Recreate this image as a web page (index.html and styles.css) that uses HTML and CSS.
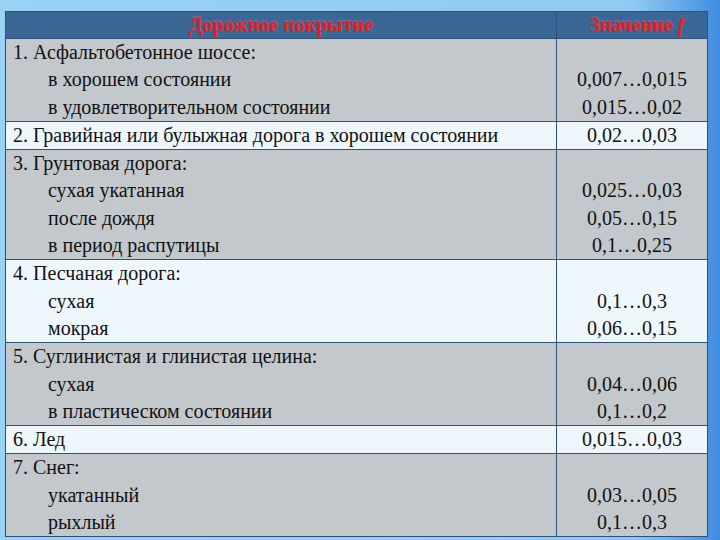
FILE: index.html
```html
<!DOCTYPE html>
<html lang="ru">
<head>
<meta charset="utf-8">
<link rel="stylesheet" href="styles.css">
</head>
<body>
<div class="slide">
<table class="grid">
<thead>
<tr><th class="c1">Дорожное покрытие</th><th class="c2">Значение <i>f</i></th></tr>
</thead>
<tbody>
<tr class="gray">
<td class="c1"><div>1. Асфальтобетонное шоссе:</div><div class="sub">в хорошем состоянии</div><div class="sub">в удовлетворительном состоянии</div></td>
<td class="c2"><div>&nbsp;</div><div>0,007…0,015</div><div>0,015…0,02</div></td>
</tr>
<tr class="light">
<td class="c1"><div>2. Гравийная или булыжная дорога в хорошем состоянии</div></td>
<td class="c2"><div>0,02…0,03</div></td>
</tr>
<tr class="gray">
<td class="c1"><div>3. Грунтовая дорога:</div><div class="sub">сухая укатанная</div><div class="sub">после дождя</div><div class="sub">в период распутицы</div></td>
<td class="c2"><div>&nbsp;</div><div>0,025…0,03</div><div>0,05…0,15</div><div>0,1…0,25</div></td>
</tr>
<tr class="light">
<td class="c1"><div>4. Песчаная дорога:</div><div class="sub">сухая</div><div class="sub">мокрая</div></td>
<td class="c2"><div>&nbsp;</div><div>0,1…0,3</div><div>0,06…0,15</div></td>
</tr>
<tr class="gray">
<td class="c1"><div>5. Суглинистая и глинистая целина:</div><div class="sub">сухая</div><div class="sub">в пластическом состоянии</div></td>
<td class="c2"><div>&nbsp;</div><div>0,04…0,06</div><div>0,1…0,2</div></td>
</tr>
<tr class="light">
<td class="c1"><div>6. Лед</div></td>
<td class="c2"><div>0,015…0,03</div></td>
</tr>
<tr class="gray">
<td class="c1"><div>7. Снег:</div><div class="sub">укатанный</div><div class="sub">рыхлый</div></td>
<td class="c2"><div>&nbsp;</div><div>0,03…0,05</div><div>0,1…0,3</div></td>
</tr>
</tbody>
</table>
</div>
</body>
</html>
```
FILE: styles.css
```css
html, body {
  margin: 0;
  padding: 0;
}
body {
  width: 720px;
  height: 540px;
  overflow: hidden;
  background: linear-gradient(90deg, #9ad2f4 0%, #8fcaf1 88%, #5aa2e6 96%, #3f8be0 100%);
  font-family: "Liberation Serif", "Times New Roman", serif;
}
.slide {
  padding: 11px 0 0 5px;
}
.grid {
  border-collapse: collapse;
  width: 703px;
  table-layout: fixed;
  font-family: "Liberation Serif", "Times New Roman", serif;
}
.grid th, .grid td {
  border: 1px solid #2f5179;
  padding: 0;
  vertical-align: top;
}
.grid th {
  background: #3a6794;
  color: #e3221c;
  font-weight: bold;
  font-size: 20px;
  height: 26px;
  line-height: 26px;
  text-align: center;
  vertical-align: middle;
  text-shadow: 0 -2px 1px rgba(110, 120, 210, 0.55);
}
.grid th.c2 {
  padding-left: 10px;
}
.c1 {
  width: 550px;
}
.grid td {
  font-size: 20px;
  line-height: 27.3px;
  color: #111;
}
.grid td.c1 {
  padding-left: 7px;
}
.grid td.c2 {
  text-align: center;
}
.sub {
  padding-left: 35px;
}
.gray td {
  background: #c2c8cb;
}
.light td {
  background: #eef7fb;
}
```
